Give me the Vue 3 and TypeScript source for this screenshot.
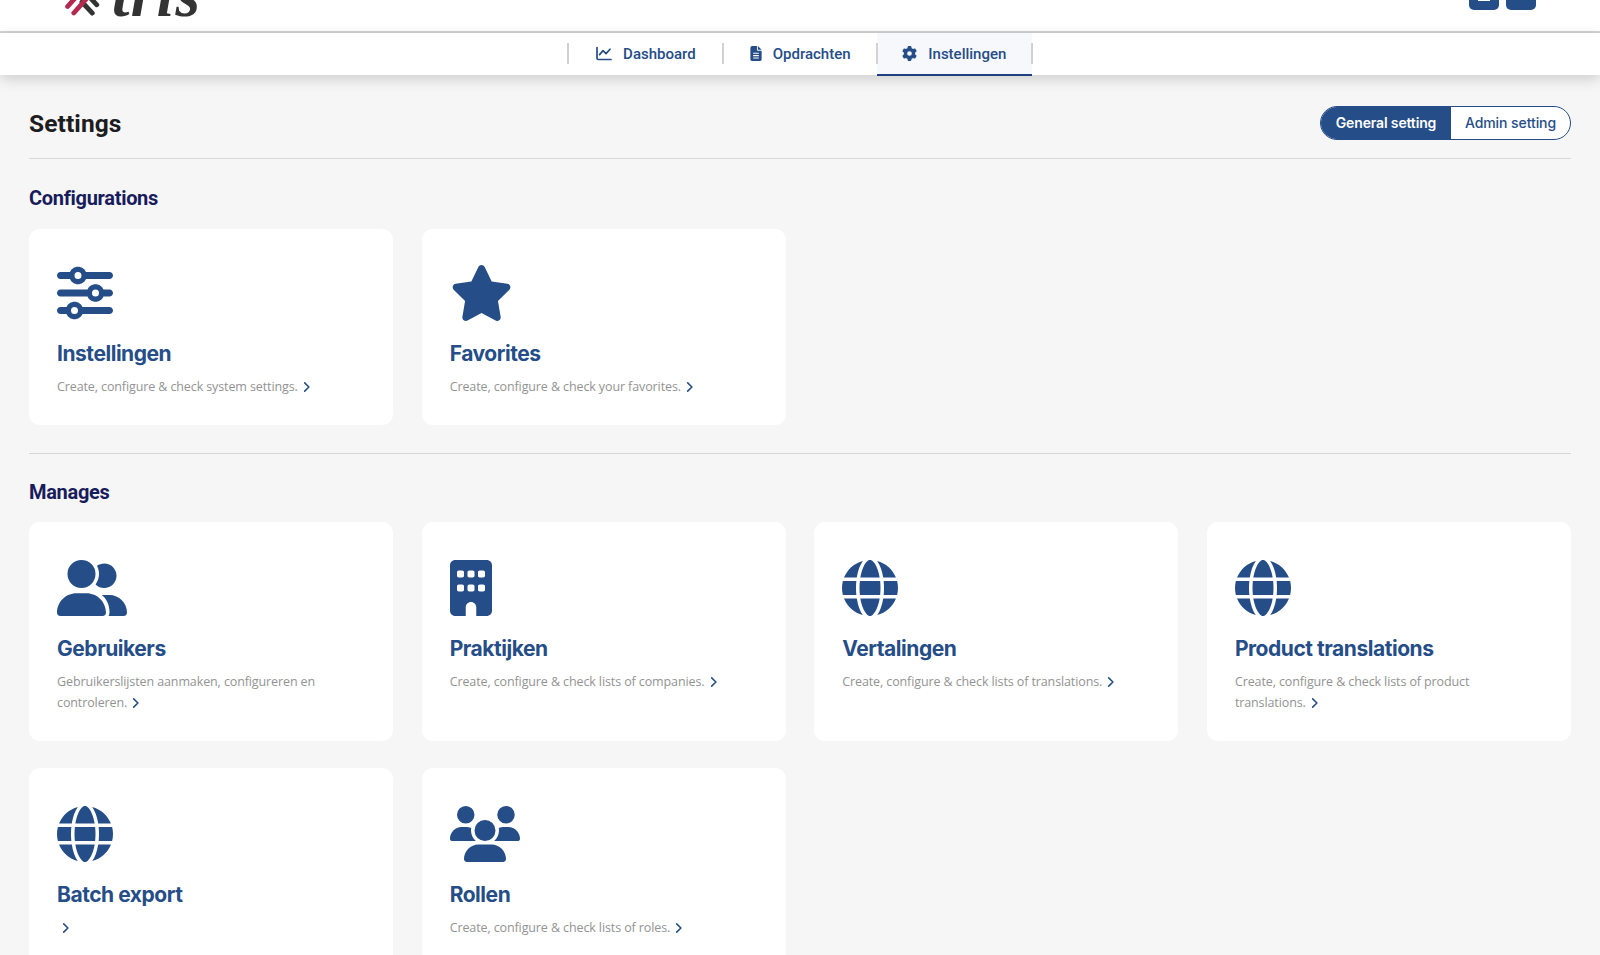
<script setup lang="ts">
interface Shape {
  width: number
  path: string
}
interface Card {
  title: string
  text: string
  icon: keyof typeof shapes
}
interface Section {
  heading: string
  key: string
  cards: Card[]
}

const shapes = {
  sliders: {
    width: 512,
    path: 'M0 416c0 17.7 14.3 32 32 32l54.7 0c12.3 28.3 40.5 48 73.3 48s61-19.7 73.3-48L480 448c17.7 0 32-14.3 32-32s-14.3-32-32-32l-246.7 0c-12.3-28.3-40.5-48-73.3-48s-61 19.7-73.3 48L32 384c-17.7 0-32 14.3-32 32zm128 0a32 32 0 1 1 64 0 32 32 0 1 1 -64 0zM320 256a32 32 0 1 1 64 0 32 32 0 1 1 -64 0zm32-80c-32.8 0-61 19.7-73.3 48L32 224c-17.7 0-32 14.3-32 32s14.3 32 32 32l246.7 0c12.3 28.3 40.5 48 73.3 48s61-19.7 73.3-48l54.7 0c17.7 0 32-14.3 32-32s-14.3-32-32-32l-54.7 0c-12.3-28.3-40.5-48-73.3-48zM192 128a32 32 0 1 1 0-64 32 32 0 1 1 0 64zm73.3-64C253 35.7 224.8 16 192 16s-61 19.7-73.3 48L32 64C14.3 64 0 78.3 0 96s14.3 32 32 32l86.7 0c12.3 28.3 40.5 48 73.3 48s61-19.7 73.3-48L480 128c17.7 0 32-14.3 32-32s-14.3-32-32-32L265.3 64z',
  },
  star: {
    width: 576,
    path: 'M316.9 18C311.6 7 300.4 0 288.1 0s-23.4 7-28.8 18L195 150.3 51.4 171.5c-12 1.8-22 10.2-25.7 21.7s-.7 24.2 7.9 32.7L137.8 329 113.2 474.7c-2 12 3 24.2 12.9 31.3s23 8 33.8 2.3l128.3-68.5 128.3 68.5c10.8 5.7 23.9 4.9 33.8-2.3s14.9-19.3 12.9-31.3L438.5 329 542.7 225.9c8.6-8.5 11.7-21.2 7.9-32.7s-13.7-19.9-25.7-21.7L381.2 150.3 316.9 18z',
  },
  userGroup: {
    width: 640,
    path: 'M96 128a128 128 0 1 1 256 0A128 128 0 1 1 96 128zM0 482.3C0 383.8 79.8 304 178.3 304l91.4 0C368.2 304 448 383.8 448 482.3c0 16.4-13.3 29.7-29.7 29.7L29.7 512C13.3 512 0 498.7 0 482.3zM609.3 512l-137.8 0c5.4-9.4 8.6-20.3 8.6-32l0-8c0-60.7-27.1-115.2-69.8-151.8c2.4-.1 4.7-.2 7.1-.2l61.4 0C567.8 320 640 392.2 640 481.3c0 17-13.8 30.7-30.7 30.7zM432 256c-31 0-59-12.6-79.3-32.9C372.4 196.5 384 163.6 384 128c0-26.8-6.6-52.1-18.3-74.3C384.3 40.1 407.2 32 432 32c61.9 0 112 50.1 112 112s-50.1 112-112 112z',
  },
  building: {
    width: 384,
    path: 'M48 0C21.5 0 0 21.5 0 48L0 464c0 26.5 21.5 48 48 48l96 0 0-80c0-26.5 21.5-48 48-48s48 21.5 48 48l0 80 96 0c26.5 0 48-21.5 48-48l0-416c0-26.5-21.5-48-48-48L48 0zM64 240c0-8.8 7.2-16 16-16l32 0c8.8 0 16 7.2 16 16l0 32c0 8.8-7.2 16-16 16l-32 0c-8.8 0-16-7.2-16-16l0-32zm112-16l32 0c8.8 0 16 7.2 16 16l0 32c0 8.8-7.2 16-16 16l-32 0c-8.8 0-16-7.2-16-16l0-32c0-8.8 7.2-16 16-16zm80 16c0-8.8 7.2-16 16-16l32 0c8.8 0 16 7.2 16 16l0 32c0 8.8-7.2 16-16 16l-32 0c-8.8 0-16-7.2-16-16l0-32zM80 96l32 0c8.8 0 16 7.2 16 16l0 32c0 8.8-7.2 16-16 16l-32 0c-8.8 0-16-7.2-16-16l0-32c0-8.8 7.2-16 16-16zm80 16c0-8.8 7.2-16 16-16l32 0c8.8 0 16 7.2 16 16l0 32c0 8.8-7.2 16-16 16l-32 0c-8.8 0-16-7.2-16-16l0-32zM272 96l32 0c8.8 0 16 7.2 16 16l0 32c0 8.8-7.2 16-16 16l-32 0c-8.8 0-16-7.2-16-16l0-32c0-8.8 7.2-16 16-16z',
  },
  globe: {
    width: 512,
    path: 'M352 256c0 22.2-1.2 43.6-3.3 64l-185.3 0c-2.2-20.4-3.3-41.8-3.3-64s1.2-43.6 3.3-64l185.3 0c2.2 20.4 3.3 41.8 3.3 64zm28.8-64l123.1 0c5.3 20.5 8.1 41.9 8.1 64s-2.8 43.5-8.1 64l-123.1 0c2.1-20.6 3.2-42 3.2-64s-1.1-43.4-3.2-64zm112.6-32l-116.7 0c-10-63.9-29.8-117.4-55.3-151.6c78.3 20.7 142 77.5 171.9 151.6zm-149.1 0l-176.6 0c6.1-36.4 15.5-68.6 27-94.7c10.5-23.6 22.2-40.7 33.5-51.5C239.4 3.2 248.7 0 256 0s16.6 3.2 27.8 13.8c11.3 10.8 23 27.9 33.5 51.5c11.6 26 20.9 58.2 27 94.7zm-209 0L18.6 160C48.6 85.9 112.2 29.1 190.6 8.4C165.1 42.6 145.3 96.1 135.3 160zM8.1 192l123.1 0c-2.1 20.6-3.2 42-3.2 64s1.1 43.4 3.2 64L8.1 320C2.8 299.5 0 278.1 0 256s2.8-43.5 8.1-64zM194.7 446.6c-11.6-26-20.9-58.2-27-94.6l176.6 0c-6.1 36.4-15.5 68.6-27 94.6c-10.5 23.6-22.2 40.7-33.5 51.5C272.6 508.8 263.3 512 256 512s-16.6-3.2-27.8-13.8c-11.3-10.8-23-27.9-33.5-51.5zM135.3 352c10 63.9 29.8 117.4 55.3 151.6C112.2 482.9 48.6 426.1 18.6 352l116.7 0zm358.1 0c-30 74.1-93.6 130.9-171.9 151.6c25.5-34.2 45.2-87.7 55.3-151.6l116.7 0z',
  },
  users: {
    width: 640,
    path: 'M144 0a80 80 0 1 1 0 160A80 80 0 1 1 144 0zM512 0a80 80 0 1 1 0 160A80 80 0 1 1 512 0zM0 298.7C0 239.8 47.8 192 106.7 192l42.7 0c15.9 0 31 3.5 44.6 9.7c-1.3 7.2-1.9 14.7-1.9 22.3c0 38.2 16.8 72.5 43.3 96c-.2 0-.4 0-.7 0L21.3 320C9.6 320 0 310.4 0 298.7zM405.3 320c-.2 0-.4 0-.7 0c26.6-23.5 43.3-57.8 43.3-96c0-7.6-.7-15-1.9-22.3c13.6-6.3 28.7-9.7 44.6-9.7l42.7 0C592.2 192 640 239.8 640 298.7c0 11.8-9.6 21.3-21.3 21.3l-213.3 0zM224 224a96 96 0 1 1 192 0 96 96 0 1 1 -192 0zM128 485.3C128 411.7 187.7 352 261.3 352l117.3 0C452.3 352 512 411.7 512 485.3c0 14.7-11.9 26.7-26.7 26.7l-330.7 0c-14.7 0-26.7-11.9-26.7-26.7z',
  },
} satisfies Record<string, Shape>

const gear =
  'M495.9 166.6c3.2 8.7 .5 18.4-6.4 24.6l-43.3 39.4c1.1 8.3 1.7 16.8 1.7 25.4s-.6 17.1-1.7 25.4l43.3 39.4c6.9 6.2 9.6 15.9 6.4 24.6c-4.4 11.9-9.7 23.3-15.8 34.3l-4.7 8.1c-6.6 11-14 21.4-22.1 31.2c-5.9 7.2-15.7 9.6-24.5 6.8l-55.7-17.7c-13.4 10.3-28.2 18.9-44 25.4l-12.5 57.1c-2 9.1-9 16.3-18.2 17.8c-13.8 2.3-28 3.5-42.5 3.5s-28.7-1.2-42.5-3.5c-9.2-1.5-16.2-8.7-18.2-17.8l-12.5-57.1c-15.8-6.5-30.6-15.1-44-25.4L83.1 425.9c-8.8 2.8-18.6 .3-24.5-6.8c-8.1-9.8-15.5-20.2-22.1-31.2l-4.7-8.1c-6.1-11-11.4-22.4-15.8-34.3c-3.2-8.7-.5-18.4 6.4-24.6l43.3-39.4C64.6 273.1 64 264.6 64 256s.6-17.1 1.7-25.4L22.4 191.2c-6.9-6.2-9.6-15.9-6.4-24.6c4.4-11.9 9.7-23.3 15.8-34.3l4.7-8.1c6.6-11 14-21.4 22.1-31.2c5.9-7.2 15.7-9.6 24.5-6.8l55.7 17.7c13.4-10.3 28.2-18.9 44-25.4l12.5-57.1c2-9.1 9-16.3 18.2-17.8C227.3 1.2 241.5 0 256 0s28.7 1.2 42.5 3.5c9.2 1.5 16.2 8.7 18.2 17.8l12.5 57.1c15.8 6.5 30.6 15.1 44 25.4l55.7-17.7c8.8-2.8 18.6-.3 24.5 6.8c8.1 9.8 15.5 20.2 22.1 31.2l4.7 8.1c6.1 11 11.4 22.4 15.8 34.3zM256 336a80 80 0 1 0 0-160 80 80 0 1 0 0 160z'

const sections: Section[] = [
  {
    heading: 'Configurations',
    key: 'configurations',
    cards: [
      { title: 'Instellingen', text: 'Create, configure & check system settings.', icon: 'sliders' },
      { title: 'Favorites', text: 'Create, configure & check your favorites.', icon: 'star' },
    ],
  },
  {
    heading: 'Manages',
    key: 'manages',
    cards: [
      { title: 'Gebruikers', text: 'Gebruikerslijsten aanmaken, configureren en controleren.', icon: 'userGroup' },
      { title: 'Praktijken', text: 'Create, configure & check lists of companies.', icon: 'building' },
      { title: 'Vertalingen', text: 'Create, configure & check lists of translations.', icon: 'globe' },
      { title: 'Product translations', text: 'Create, configure & check lists of product translations.', icon: 'globe' },
      { title: 'Batch export', text: '', icon: 'globe' },
      { title: 'Rollen', text: 'Create, configure & check lists of roles.', icon: 'users' },
    ],
  },
]
</script>

<template>
  <div class="page">
    <header class="top">
      <div class="brand">
        <svg class="mark" viewBox="0 0 38 40" width="38" height="40">
          <g fill="none" stroke-width="4.8" stroke-linecap="round">
            <path stroke="#333" d="M20 24l10.3 11.1M26.5 18l8.3 8.8" />
            <path stroke="#b5294e" d="M15 18L5.6 28.5M26 19L11.8 35" />
          </g>
        </svg>
        <span class="word">tris</span>
      </div>
      <div class="tools">
        <button class="tool"><i class="dash"></i></button>
        <button class="tool"></button>
      </div>
    </header>

    <nav class="nav">
      <a class="tab">
        <svg class="chart" viewBox="0 0 16 16" width="16" height="16">
          <path
            d="M1 1.5v10.7q0 1.3 1.3 1.3H15M3.6 8.6l3.4-4 3 3 4-4.4"
            fill="none"
            stroke="currentColor"
            stroke-width="1.7"
            stroke-linecap="round"
            stroke-linejoin="round"
          />
        </svg>
        <span>Dashboard</span>
      </a>
      <a class="tab tab-file">
        <svg viewBox="0 0 12 16" width="12" height="15">
          <path
            fill="currentColor"
            fill-rule="evenodd"
            d="M2 0h5v4q0 1 1 1h4v9q0 2-2 2H2q-2 0-2-2V2Q0 0 2 0zM8 0l4 4H8zM3 7.2v1.1h6V7.2zM3 9.7v1.1h6V9.7zM3 12.2v1.1h6v-1.1z"
          />
        </svg>
        <span>Opdrachten</span>
      </a>
      <a class="tab tab-gear active">
        <svg viewBox="0 0 512 512" width="15" height="15"><path fill="currentColor" :d="gear" /></svg>
        <span>Instellingen</span>
      </a>
    </nav>

    <main class="content">
      <div class="titlebar">
        <h1>Settings</h1>
        <div class="switch">
          <button class="seg on">General setting</button>
          <button class="seg off">Admin setting</button>
        </div>
      </div>

      <section v-for="s in sections" :key="s.key" :class="['section', s.key]">
        <h2>{{ s.heading }}</h2>
        <div class="grid">
          <article v-for="c in s.cards" :key="c.title" class="card">
            <svg
              class="icon"
              :viewBox="`0 0 ${shapes[c.icon].width} 512`"
              :width="(shapes[c.icon].width * 56) / 512"
              height="56"
            >
              <path fill="currentColor" :d="shapes[c.icon].path" />
            </svg>
            <h3>{{ c.title }}</h3>
            <p>
              {{ c.text }}
              <svg :class="['chev', { alone: !c.text }]" viewBox="0 0 8 12" width="8" height="12">
                <path d="M1.7 1.9L5.9 6 1.7 10.1" fill="none" stroke="currentColor" stroke-width="1.6" stroke-linecap="round" stroke-linejoin="round" />
              </svg>
            </p>
          </article>
        </div>
      </section>
    </main>
  </div>
</template>

<style>
body {
  margin: 0;
  overflow: hidden;
}
</style>

<style scoped>
.page {
  box-sizing: border-box;
  height: 955px;
  overflow: hidden;
  background: #f6f6f6;
  color: #254d87;
  font-family: Inter, 'Liberation Sans', sans-serif;
}
.top {
  display: flex;
  justify-content: space-between;
  align-items: flex-end;
  box-sizing: border-box;
  height: 33px;
  padding: 0 64px 0 62px;
  background: #fff;
  border-bottom: 2px solid #d2d2d2;
}
.brand {
  display: flex;
  align-items: flex-end;
  height: 40px;
  margin-bottom: 13px;
}
.mark {
  flex: none;
}
.word {
  margin-left: 12px;
  color: #333;
  font: italic bold 63px/46px 'Liberation Serif', serif;
  letter-spacing: 1.3px;
}
.tools {
  display: flex;
  gap: 7px;
  margin-bottom: 21px;
}
.tool {
  display: flex;
  justify-content: center;
  align-items: flex-end;
  width: 30px;
  height: 30px;
  padding: 0 0 9px;
  border: 0;
  border-radius: 5px;
  background: #254d87;
}
.dash {
  width: 12px;
  height: 2px;
  background: #fff;
}
.nav {
  position: relative;
  display: flex;
  justify-content: center;
  height: 42px;
  background: #fff;
  box-shadow: 0 4px 14px rgba(0, 0, 0, 0.17);
}
.tab {
  position: relative;
  display: flex;
  align-items: center;
  box-sizing: border-box;
  width: 154.6px;
  padding: 0 0 1px 28px;
  font: 500 15px/20px Roboto, sans-serif;
}
.tab span {
  margin: 1px 0 0 11px;
}
.tab-file {
  padding-left: 27px;
}
.tab-gear {
  padding-left: 25px;
}
.tab::before,
.tab:last-child::after {
  content: '';
  position: absolute;
  left: 0;
  top: 10px;
  width: 2px;
  height: 21px;
  margin-left: -1px;
  background: #d2d2d2;
}
.tab:last-child::after {
  left: auto;
  right: -1px;
}
.active {
  height: 43px;
  padding-bottom: 0;
  background: #f7f8fb;
  border-bottom: 2px solid #1e3f80;
}
.content {
  padding: 31px 29px 0;
}
.titlebar {
  display: flex;
  justify-content: space-between;
  align-items: flex-start;
  box-sizing: border-box;
  height: 53px;
  border-bottom: 1px solid #d9d9d9;
}
h1,
h2,
h3,
p {
  margin: 0;
}
h1 {
  color: #1d1d1f;
  font: 700 24.5px/36px Roboto, sans-serif;
  letter-spacing: 0.1px;
}
.switch {
  display: flex;
  box-sizing: border-box;
  width: 251px;
  height: 34px;
  overflow: hidden;
  border: 1px solid #254d87;
  border-radius: 17px;
  background: #fff;
}
.seg {
  padding: 0;
  border: 0;
  background: none;
  color: #254d87;
  font: 500 14px/32px Inter, sans-serif;
  letter-spacing: -0.08px;
}
.on {
  width: 130px;
  background: #254d87;
  color: #fff;
  font-weight: 600;
  letter-spacing: -0.15px;
}
.off {
  flex: 1;
}
h2 {
  color: #191c5c;
  font: 700 20px/26px Roboto, sans-serif;
  letter-spacing: -0.3px;
}
.section {
  padding-top: 26px;
}
.configurations {
  padding-bottom: 28px;
  border-bottom: 1px solid #d6d6d6;
}
.manages {
  padding-top: 25px;
}
.grid {
  display: grid;
  grid-template-columns: repeat(4, 1fr);
  gap: 27px 28.5px;
  margin-top: 18px;
}
.manages .grid {
  margin-top: 17px;
}
.card {
  box-sizing: border-box;
  padding: 38px 28px 28px;
  border-radius: 11px;
  background: #fff;
}
.configurations .card {
  height: 196px;
  padding-top: 36px;
}
.icon {
  display: block;
}
h3 {
  margin-top: 18px;
  font: 700 21px/30px Inter, sans-serif;
  letter-spacing: -0.46px;
}
p {
  margin-top: 7px;
  color: #939393;
  font: 400 12.5px/21px 'Open Sans', sans-serif;
  letter-spacing: -0.11px;
}
.chev {
  margin-left: 2px;
  color: #254d87;
  vertical-align: -2px;
}
.alone {
  margin-left: 5px;
}
</style>
